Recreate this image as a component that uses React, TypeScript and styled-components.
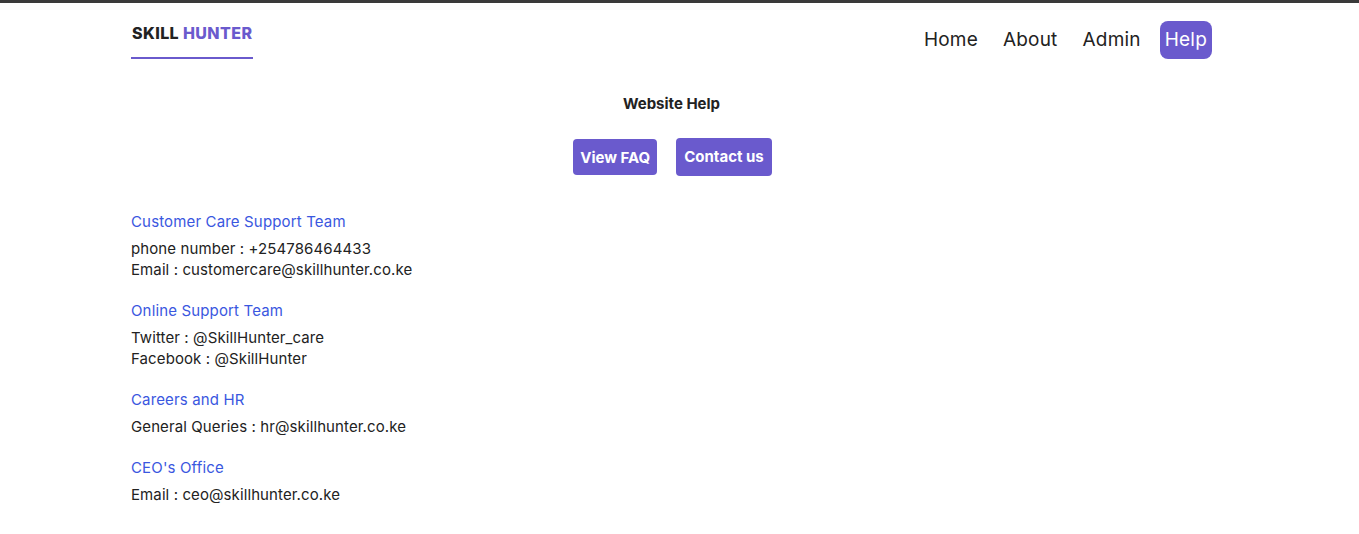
import React from "react";
import styled, { createGlobalStyle } from "styled-components";

const GlobalStyle = createGlobalStyle`
  html, body { margin: 0; padding: 0; background: #ffffff; }
  body { font-family: Inter, "Open Sans", sans-serif; color: #222222; }
  * { box-sizing: border-box; }
`;

const TopStrip = styled.div`
  height: 3px;
  background: #3a3a3a;
`;

const Page = styled.div`
  width: 1081px;
  margin-left: 131px;
`;

const Header = styled.header`
  display: flex;
  justify-content: space-between;
  align-items: flex-start;
  padding-top: 18px;
`;

const Logo = styled.div`
  font-size: 16px;
  font-weight: 800;
  line-height: 24px;
  padding: 0 1px 12px 1px;
  border-bottom: 2px solid #6a5acd;
  color: #222222;
  letter-spacing: 0.4px;
`;

const LogoAccent = styled.span`
  color: #6a5acd;
`;

const Nav = styled.nav`
  display: flex;
  align-items: center;
  gap: 13px;
`;

const NavLink = styled.a<{ $active?: boolean }>`
  display: block;
  padding: ${(p) => (p.$active ? "0 5px" : "0 6px")};
  height: 38px;
  line-height: 38px;
  font-size: 19px;
  font-weight: 400;
  letter-spacing: 0.2px;
  color: ${(p) => (p.$active ? "#ffffff" : "#222222")};
  background: ${(p) => (p.$active ? "#6a5acd" : "transparent")};
  border-radius: 8px;
  text-decoration: none;
`;

const HelpTitle = styled.h1`
  margin: 35px 0 0 0;
  text-align: center;
  font-size: 15px;
  font-weight: 700;
  line-height: 20px;
  color: #222222;
`;

const ButtonRow = styled.div`
  display: flex;
  justify-content: center;
  align-items: center;
  gap: 19px;
  margin: 24px 0 0 2px;
`;

const ActionButton = styled.button<{ $tall?: boolean }>`
  height: ${(p) => (p.$tall ? "38px" : "36px")};
  padding: ${(p) => (p.$tall ? "0 8px 2px 8px" : "0 7px")};
  background: #6a5acd;
  color: #ffffff;
  border: none;
  border-radius: 4px;
  font-family: inherit;
  font-size: 15px;
  font-weight: 700;
`;

const Sections = styled.div`
  display: flex;
  flex-direction: column;
  gap: 20px;
  margin-top: 35px;
`;

const Section = styled.section`
  display: flex;
  flex-direction: column;
`;

const SectionTitle = styled.h2`
  margin: 0 0 5px 0;
  font-size: 15px;
  font-weight: 400;
  line-height: 22px;
  letter-spacing: 0.15px;
  color: #3a57e0;
`;

const Line = styled.p`
  margin: 0;
  font-size: 15px;
  line-height: 21px;
  letter-spacing: 0.1px;
  color: #222222;
`;

const sections = [
  {
    title: "Customer Care Support Team",
    lines: ["phone number : +254786464433", "Email : customercare@skillhunter.co.ke"],
  },
  {
    title: "Online Support Team",
    lines: ["Twitter : @SkillHunter_care", "Facebook : @SkillHunter"],
  },
  {
    title: "Careers and HR",
    lines: ["General Queries : hr@skillhunter.co.ke"],
  },
  {
    title: "CEO's Office",
    lines: ["Email : ceo@skillhunter.co.ke"],
  },
];

export default function App() {
  return (
    <>
      <GlobalStyle />
      <TopStrip />
      <Page>
        <Header>
          <Logo>
            SKILL <LogoAccent>HUNTER</LogoAccent>
          </Logo>
          <Nav>
            <NavLink href="#">Home</NavLink>
            <NavLink href="#">About</NavLink>
            <NavLink href="#">Admin</NavLink>
            <NavLink href="#" $active>
              Help
            </NavLink>
          </Nav>
        </Header>
        <HelpTitle>Website Help</HelpTitle>
        <ButtonRow>
          <ActionButton>View FAQ</ActionButton>
          <ActionButton $tall>Contact us</ActionButton>
        </ButtonRow>
        <Sections>
          {sections.map((s) => (
            <Section key={s.title}>
              <SectionTitle>{s.title}</SectionTitle>
              {s.lines.map((l) => (
                <Line key={l}>{l}</Line>
              ))}
            </Section>
          ))}
        </Sections>
      </Page>
    </>
  );
}
